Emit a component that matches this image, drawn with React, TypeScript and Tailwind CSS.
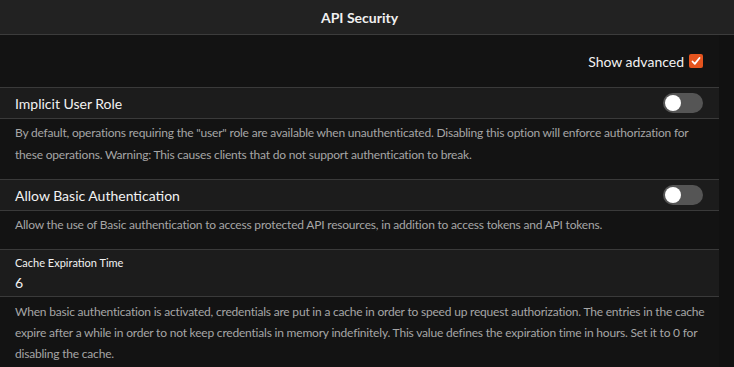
import { useState } from "react";

const FONT = { fontFamily: '"Segoe UI", Lato, "Noto Sans", sans-serif' };

type SettingProps = {
  title: string;
  description: string;
  enabled: boolean;
  onToggle: () => void;
};

function Toggle({ on, onClick }: { on: boolean; onClick: () => void }) {
  return (
    <button
      type="button"
      onClick={onClick}
      className={`flex h-[20px] w-[40px] items-center rounded-full px-[2px] ${
        on ? "justify-end bg-[#e5541e]" : "justify-start bg-[#555555]"
      }`}
    >
      <span className="h-[16px] w-[16px] rounded-full bg-white" />
    </button>
  );
}

function Setting({ title, description, enabled, onToggle }: SettingProps) {
  return (
    <div>
      <div className="flex h-[31px] items-center justify-between border-b border-[#3a3a3a] bg-[#1c1c1c] pl-[15px] pr-[16px]">
        <span className="text-[14px] text-[#f2f2f2]">{title}</span>
        <Toggle on={enabled} onClick={onToggle} />
      </div>
      <p className="border-b border-[#3a3a3a] px-[15px] pb-[13px] pt-[3px] text-[12px] leading-[22px] tracking-[-0.2px] text-[#a6a6a6]">
        {description}
      </p>
    </div>
  );
}

export default function App() {
  const [advanced, setAdvanced] = useState(true);
  const [implicitRole, setImplicitRole] = useState(false);
  const [basicAuth, setBasicAuth] = useState(false);
  const [cacheHours, setCacheHours] = useState("6");

  return (
    <div style={FONT} className="flex h-[367px] w-[734px] flex-col overflow-hidden bg-[#131313]">
      {/* header, title centred over the content column (scrollbar gutter on the right) */}
      <div className="flex h-[35px] shrink-0 items-center justify-center border-b border-[#3c3c3c] bg-[#222222] pr-[15px]">
        <span className="text-[14px] font-bold text-[#f0f0f0]">API Security</span>
      </div>

      <div className="flex flex-1">
        <div className="w-[719px]">
          <div className="flex h-[53px] items-center justify-end gap-[5px] border-b border-[#3a3a3a] pr-[16px]">
            <span className="text-[14px] text-[#f2f2f2]">Show advanced</span>
            <button
              type="button"
              onClick={() => setAdvanced(!advanced)}
              className={`flex h-[14px] w-[14px] items-center justify-center rounded-[2px] ${
                advanced ? "bg-[#e5541e]" : "border border-[#888]"
              }`}
            >
              {advanced && (
                <svg viewBox="0 0 14 14" className="h-[14px] w-[14px]" fill="none">
                  <path d="M3.5 7.5l2.3 2.4L10.5 4" stroke="white" strokeWidth="1.8" strokeLinecap="round" strokeLinejoin="round" />
                </svg>
              )}
            </button>
          </div>

          <Setting
            title="Implicit User Role"
            description={'By default, operations requiring the "user" role are available when unauthenticated. Disabling this option will enforce authorization for these operations. Warning: This causes clients that do not support authentication to break.'}
            enabled={implicitRole}
            onToggle={() => setImplicitRole(!implicitRole)}
          />
          <Setting
            title="Allow Basic Authentication"
            description="Allow the use of Basic authentication to access protected API resources, in addition to access tokens and API tokens."
            enabled={basicAuth}
            onToggle={() => setBasicAuth(!basicAuth)}
          />

          {/* cache expiration */}
          <div className="flex h-[47px] flex-col justify-center border-b border-[#3a3a3a] bg-[#1c1c1c] px-[15px]">
            <label htmlFor="cache" className="text-[11px] leading-[16px] text-[#f2f2f2]">
              Cache Expiration Time
            </label>
            <input
              id="cache"
              value={cacheHours}
              onChange={(e) => setCacheHours(e.target.value)}
              className="mt-[3px] bg-transparent text-[14px] leading-[18px] text-[#f2f2f2] outline-none"
            />
          </div>
          <p className="pl-[15px] pt-[4px] text-[12px] leading-[21px] tracking-[-0.2px] text-[#a6a6a6]">
            When basic authentication is activated, credentials are put in a cache in order to speed up request authorization. The entries in the cache expire after a while in order to not keep credentials in memory indefinitely. This value defines the expiration time in hours. Set it to 0 for disabling the cache.
          </p>
        </div>
        <div className="flex-1 bg-[#111111]" />
      </div>
    </div>
  );
}
